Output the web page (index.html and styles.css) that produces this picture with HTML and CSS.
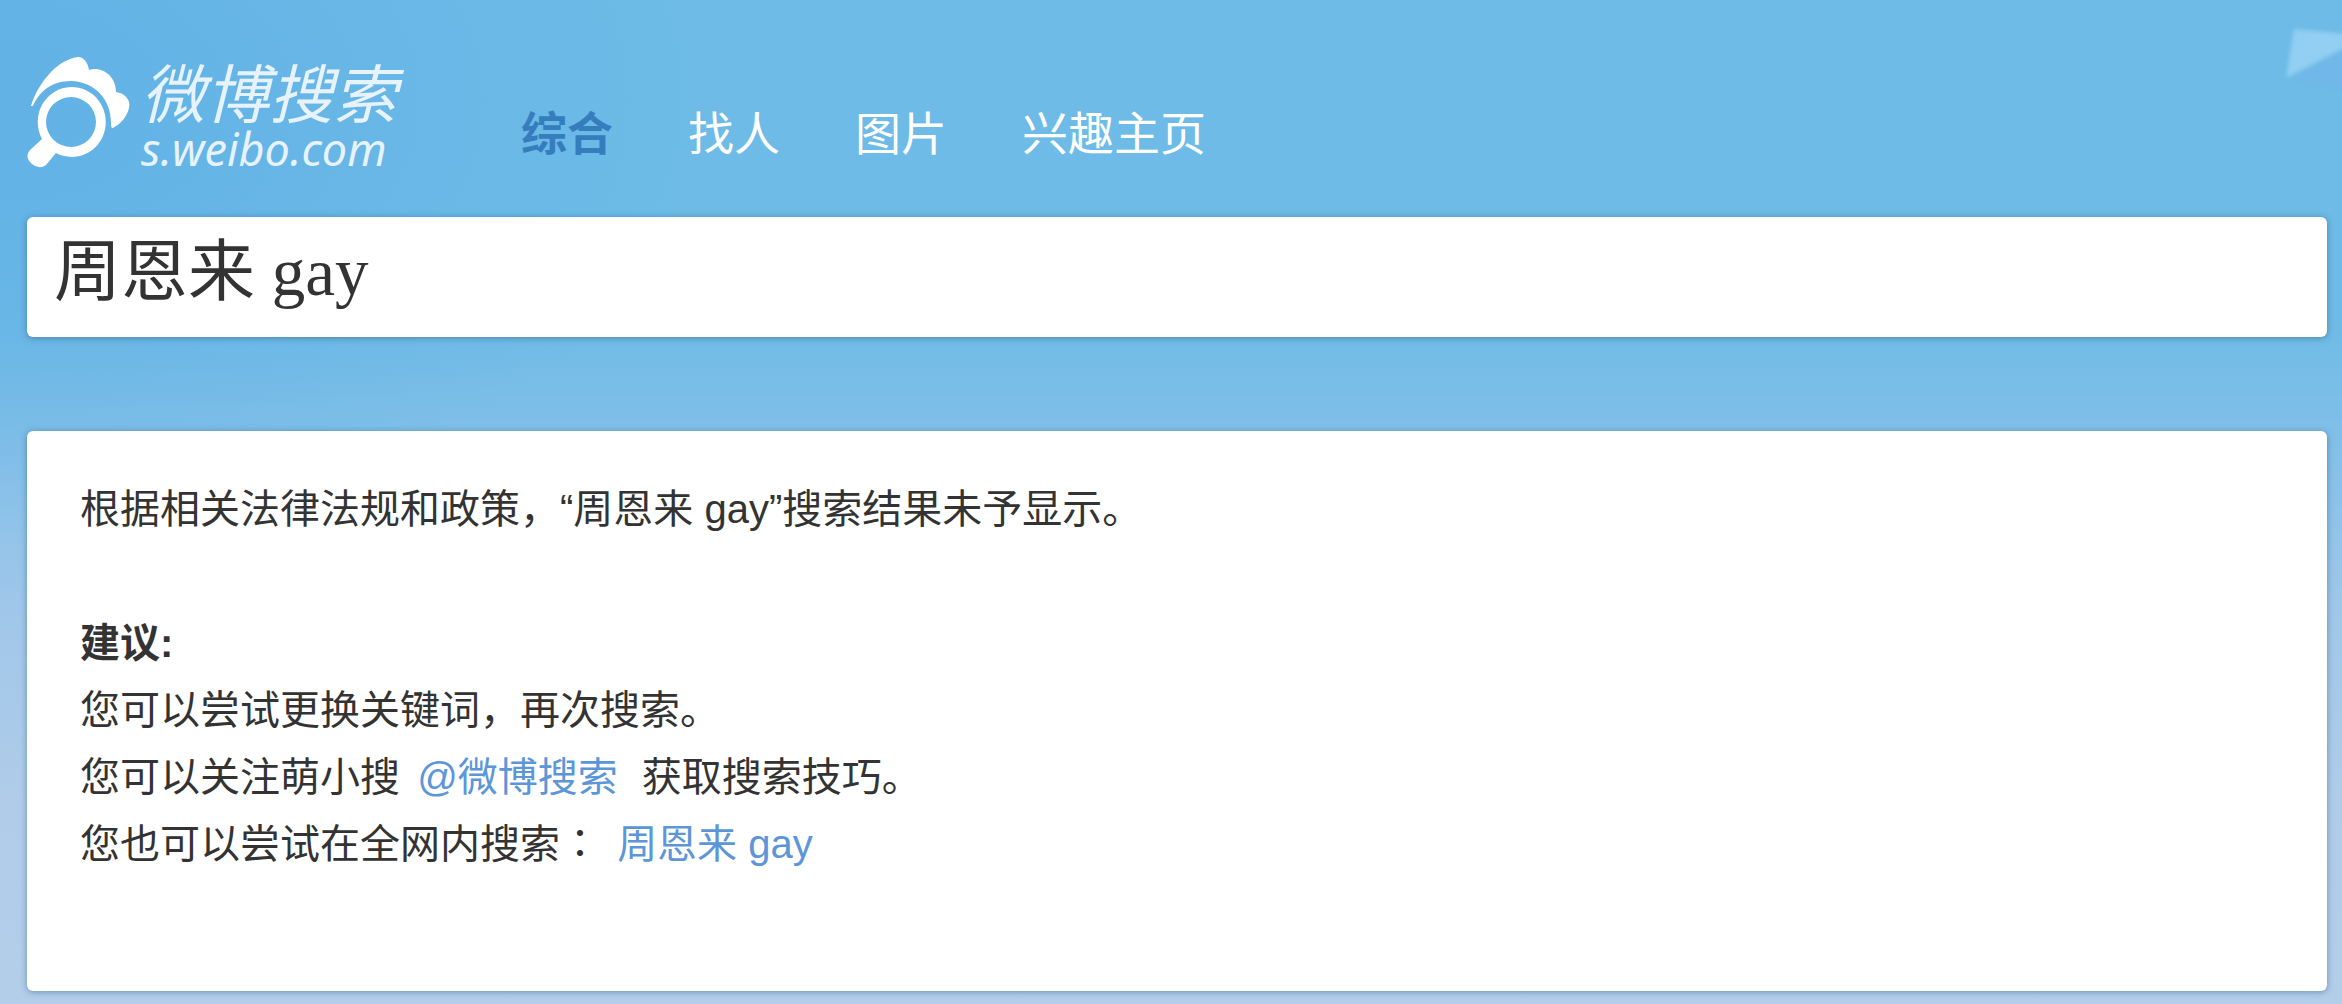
FILE: index.html
```html
<!DOCTYPE html>
<html lang="zh-CN">
<head>
<meta charset="utf-8">
<meta name="viewport" content="width=device-width, initial-scale=1">
<title>微博搜索</title>
<link rel="stylesheet" href="styles.css">
</head>
<body>
<svg class="plane" viewBox="0 0 72 100" aria-hidden="true">
  <path class="plane-fold" d="M24 78 L90 40 L90 92 Z"/>
  <path class="plane-wing" d="M24 29 L90 35 L90 40 L16 78 Z"/>
</svg>
<div class="page">
  <header class="header">
    <a class="logo" href="#">
      <svg class="logo-mark" viewBox="0 0 104 112" aria-hidden="true">
        <path d="M4 49 C10 29 28 3 51 0 C57 0 61 6 62 13 C75 9 89 19 89 35 C98 36 104 43 102 51 C100 59 95 66 86 71 C84 71 84 69 84 66 C84 42 68 25 44 24 C24 24 12 35 6 49 Z"/>
        <path fill-rule="evenodd" d="M44 30 A34 35 0 1 1 29 96 L19 108 Q12 113 5 107 Q-3 100 3 93 L15 82 A34 35 0 0 1 44 30 Z M44 40 A25 25 0 1 0 44 90 A25 25 0 1 0 44 40 Z"/>
      </svg>
      <span class="logo-text">
        <span class="logo-name">微博搜索</span>
        <span class="logo-domain">s.weibo.com</span>
      </span>
    </a>
    <nav class="tabs">
      <a class="tab tab-active" href="#">综合</a>
      <a class="tab" href="#">找人</a>
      <a class="tab" href="#">图片</a>
      <a class="tab" href="#">兴趣主页</a>
    </nav>
  </header>
  <main>
    <form class="search">
      <input class="search-input" type="text" aria-label="搜索" value="周恩来 gay">
    </form>
    <section class="result">
      <p class="notice">根据相关法律法规和政策，<q>周恩来 gay</q>搜索结果未予显示。</p>
      <h2 class="tips-title">建议:</h2>
      <p>您可以尝试更换关键词，再次搜索。</p>
      <p>您可以关注萌小搜 <a class="link link-account" href="#">@微博搜索</a> 获取搜索技巧。</p>
      <p>您也可以尝试在全网内搜索<span class="colon" lang="zh-TW">：</span> <a class="link" href="#">周恩来 gay</a></p>
    </section>
  </main>
</div>
</body>
</html>
```
FILE: styles.css
```css
* {
  box-sizing: border-box;
}

body {
  margin: 0;
  min-height: 100vh;
  position: relative;
  overflow-x: hidden;
  color: #333;
  font-family: "Liberation Sans", "Noto Sans CJK SC", sans-serif;
  background:
    radial-gradient(ellipse 700px 440px at 0 100px, rgba(86, 168, 230, 0.5), rgba(86, 168, 230, 0)) no-repeat,
    linear-gradient(#6dbbe6 0, #6dbbe6 320px, #80bfe8 430px, #a0c7e9 610px, #b0cce9 800px, #b3cee9 1004px);
}

a {
  color: inherit;
  text-decoration: none;
}

.plane {
  position: absolute;
  top: 0;
  right: 0;
  width: 72px;
  height: 100px;
}

.plane path {
  filter: blur(2px);
}

.plane-wing {
  fill: #92cff2;
}

.plane-fold {
  fill: #72b7e9;
}

.page {
  padding: 0 15px 13px 27px;
}

.header {
  display: flex;
  align-items: flex-start;
  gap: 120px;
  padding-top: 57px;
  height: 217px;
}

.logo {
  display: flex;
  gap: 10px;
  color: #fff;
}

.logo-mark {
  width: 104px;
  height: 112px;
  fill: #fff;
}

.logo-text {
  display: flex;
  flex-direction: column;
  width: 260px;
  color: #e6f3fc;
  font-style: italic;
  white-space: nowrap;
}

.logo-name {
  font-family: "Noto Sans CJK SC", sans-serif;
  font-size: 64px;
  line-height: 66px;
}

.logo-domain {
  font-family: "Noto Sans", sans-serif;
  font-size: 45px;
  line-height: 52px;
}

.tabs {
  display: flex;
  gap: 75px;
  padding-top: 45px;
  color: #fff;
  font-size: 46px;
  line-height: 64px;
  white-space: nowrap;
}

.tab-active {
  color: #367dbd;
  font-weight: bold;
}

.search-input,
.result {
  width: 100%;
  border: 0;
  border-radius: 6px;
  background: #fff;
  box-shadow: 0 1px 6px rgba(40, 80, 120, 0.5);
}

.search-input {
  display: block;
  height: 120px;
  padding: 0 27px 24px;
  color: #333;
  font-family: "Liberation Serif", "Noto Sans CJK SC", serif;
  font-size: 67px;
}

.result {
  margin-top: 94px;
  padding: 45px 53px 113px;
  font-size: 40px;
  line-height: 67px;
}

.result p,
.tips-title {
  margin: 0;
  font-size: 40px;
}

.result .notice {
  margin-bottom: 67px;
}

.link {
  margin: 0 6px;
  color: #5c96d8;
}

.link-account {
  margin-right: 13px;
}

.colon {
  font-family: "Noto Sans CJK TC", sans-serif;
  line-height: 1;
}
```
